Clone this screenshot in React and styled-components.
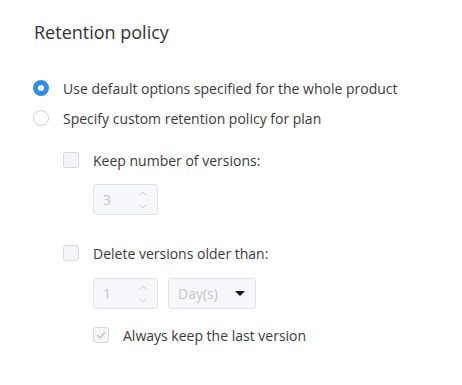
import React from 'react';
import styled, { createGlobalStyle } from "styled-components";

const Global = createGlobalStyle`
  body {
    margin: 0;
    background: #fff;
    font-family: "Open Sans", "Noto Sans", sans-serif;
    color: #333;
  }
`

const Panel = styled.div`
  width: 462px;
  height: 385px;
  box-sizing: border-box;
  padding: 20px 0 0 33px;
`

const Title = styled.h2`
  margin: 0 0 29px 1px;
  font-size: 18px;
  font-weight: 400;
  line-height: 24px;
  color: #333;
`

const Row = styled.label`
  display: flex;
  align-items: center;
  gap: 14px;
  height: 30px;
  font-size: 14px;
  margin-left: ${p => p.indent || 0}px;
  margin-top: ${p => p.top || 0}px;
  color: #3a3a3a;
`

const Radio = styled.span`
  width: 16px;
  height: 16px;
  box-sizing: border-box;
  border-radius: 50%;
  flex: none;
  background: #fff;
  border: ${p => p.checked ? "5px solid #2d8fe6" : "1px solid #cfd1d6"};
`

const Box = styled.span`
  width: 16px;
  height: 16px;
  box-sizing: border-box;
  border-radius: 3px;
  flex: none;
  border: 1px solid #d6d8dd;
  background: #f4f5fa;
  display: flex;
  align-items: center;
  justify-content: center;
`

const Group = styled.div`
  margin-top: ${p => p.top || 0}px;
`

const Fields = styled.div`
  display: flex;
  gap: 10px;
  margin: ${p => p.margin};
`

const Input = styled.div`
  width: ${p => p.w}px;
  height: 31px;
  box-sizing: border-box;
  border: 1px solid #e0e2e7;
  border-radius: 3px;
  background: #f6f7fa;
  display: flex;
  align-items: center;
  padding: 0 10px 0 9px;
  font-size: 14px;
  color: #c4c6cb;
`

const Value = styled.span`
  flex: 1;
`

const Spin = styled.svg`
  width: 10px;
  height: 24px;
  flex: none;
  margin-right: -1px;
`

const Caret = styled.span`
  width: 0;
  height: 0;
  border-left: 5px solid transparent;
  border-right: 5px solid transparent;
  border-top: 5px solid #111;
  margin-left: 8px;
`

const Spinner = () => (
  <Spin viewBox="0 0 10 24">
    <path d="M1.5 7.5 L5 4 L8.5 7.5" fill="none" stroke="#c9cbd0" strokeWidth="1" />
    <path d="M1.5 16.5 L5 20 L8.5 16.5" fill="none" stroke="#c9cbd0" strokeWidth="1" />
  </Spin>
)

const App = () => {
  return (
    <Panel>
      <Global />
      <Title>Retention policy</Title>
      <Row><Radio checked /> Use default options specified for the whole product</Row>
      <Row><Radio /> Specify custom retention policy for plan</Row>
      <Group top={12}>
        <Row indent={30}><Box /> Keep number of versions:</Row>
        <Fields margin="9px 0 0 60px">
          <Input w={65}><Value>3</Value><Spinner /></Input>
        </Fields>
        <Group top={23}>
          <Row indent={30}><Box /> Delete versions older than:</Row>
          <Fields margin="10px 0 0 60px">
            <Input w={65}><Value>1</Value><Spinner /></Input>
            <Input w={88}><Value>Day(s)</Value><Caret /></Input>
          </Fields>
          <Row indent={60} top={11}>
            <Box>
              <svg width="10" height="8" viewBox="0 0 10 8">
                <path d="M1 4 L4 7 L9 1" fill="none" stroke="#c4c6cb" strokeWidth="1.5" />
              </svg>
            </Box>
            Always keep the last version
          </Row>
        </Group>
      </Group>
    </Panel>
  );
};

export default App;
